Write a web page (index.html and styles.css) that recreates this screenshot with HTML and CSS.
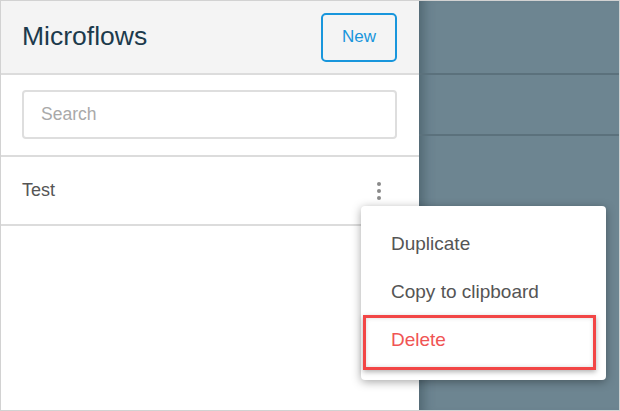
FILE: index.html
```html
<!DOCTYPE html>
<html>
<head>
<meta charset="utf-8">
<link rel="stylesheet" href="styles.css">
</head>
<body>
<div class="frame">
  <div class="sidebar">
    <div class="header">
      <h1 class="title">Microflows</h1>
      <button class="new-btn">New</button>
    </div>
    <div class="search-area">
      <div class="search">Search</div>
    </div>
    <div class="row">
      <span class="row-name">Test</span>
      <span class="kebab"><i></i><i></i><i></i></span>
    </div>
  </div>
  <div class="canvas">
    <div class="band band-top"></div>
    <div class="band band-mid"></div>
    <div class="band band-rest"></div>
  </div>
  <div class="menu">
    <div class="menu-item">Duplicate</div>
    <div class="menu-item">Copy to clipboard</div>
    <div class="menu-item danger">Delete</div>
  </div>
  <div class="highlight"></div>
</div>
</body>
</html>
```
FILE: styles.css
```css
* { box-sizing: border-box; }
html, body { margin: 0; padding: 0; background: #fff; }
body { font-family: "Liberation Sans", Arial, sans-serif; }

.frame {
  position: relative;
  width: 620px;
  height: 411px;
  border: 1px solid #d2d2d2;
  display: flex;
  overflow: hidden;
}

.sidebar {
  width: 418px;
  display: flex;
  flex-direction: column;
  background: #fff;
}

.header {
  height: 74px;
  background: #f4f4f4;
  border-bottom: 2px solid #dcdcdc;
  display: flex;
  align-items: center;
  justify-content: space-between;
  padding: 0 21px 0 21px;
}
.title {
  margin: 0;
  font-weight: normal;
  font-size: 26.5px;
  color: #1c3a4c;
  position: relative;
  top: -1px;
}
.new-btn {
  width: 76px;
  height: 49px;
  border: 2px solid #1896dc;
  border-radius: 5px;
  background: #f4f4f4;
  color: #1896dc;
  font-family: "Liberation Sans", Arial, sans-serif;
  font-size: 17px;
  padding: 0;
  position: relative;
  left: -1px;
}

.search-area {
  height: 82px;
  border-bottom: 2px solid #dcdcdc;
  padding: 15px 21px 0 21px;
}
.search {
  height: 49px;
  width: 375px;
  border: 2px solid #dedede;
  border-radius: 4px;
  padding-left: 17px;
  display: flex;
  align-items: center;
  color: #a9a9a9;
  font-size: 17.5px;
}

.row {
  height: 69px;
  border-bottom: 2px solid #dcdcdc;
  display: flex;
  align-items: center;
  justify-content: space-between;
  padding: 0 38px 0 21px;
}
.row-name {
  font-size: 18px;
  color: #555;
}
.kebab {
  display: flex;
  flex-direction: column;
  gap: 3px;
  margin-top: 1px;
}
.kebab i {
  display: block;
  width: 4px;
  height: 4px;
  border-radius: 50%;
  background: #8a8a8a;
}

.canvas {
  flex: 1;
  display: flex;
  flex-direction: column;
  background: #6d8591;
  box-shadow: inset 14px 0 12px -10px rgba(40, 60, 70, 0.45);
}
.band-top { height: 74px; border-bottom: 2px solid #5b717c; }
.band-mid { height: 61px; border-bottom: 2px solid #5b717c; }
.band-rest { flex: 1; }

.menu {
  position: absolute;
  left: 360px;
  top: 205px;
  width: 245px;
  height: 174px;
  background: #fff;
  border-radius: 4px;
  box-shadow: 0 2px 10px rgba(0, 0, 0, 0.35);
  padding-top: 14px;
}
.menu-item {
  height: 48px;
  display: flex;
  align-items: center;
  padding-left: 30px;
  font-size: 19px;
  color: #555;
}
.menu-item.danger { color: #f05454; }

.highlight {
  position: absolute;
  left: 362px;
  top: 314px;
  width: 233px;
  height: 55px;
  border: 3px solid #f24646;
  box-shadow: 0 2px 5px rgba(0, 0, 0, 0.3), inset 0 0 4px rgba(0,0,0,0.15);
}
```
